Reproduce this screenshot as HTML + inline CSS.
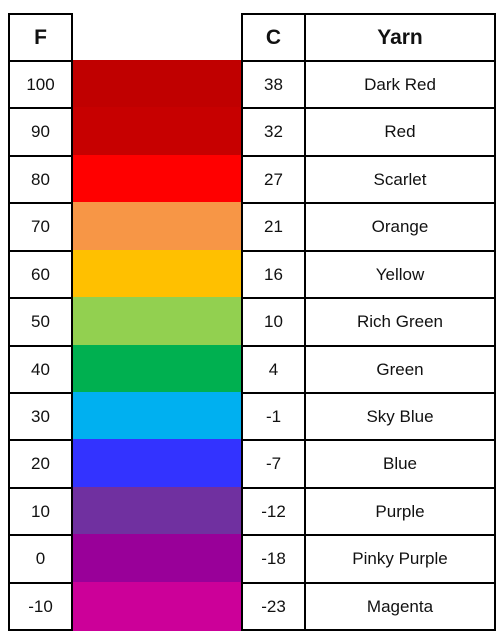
<!DOCTYPE html>
<html><head><style>
body{margin:0;width:504px;height:640px;background:#fff;font-family:"Liberation Sans",sans-serif;position:relative;overflow:hidden}
.c{position:absolute;box-sizing:border-box;display:flex;align-items:center;justify-content:center;font-size:17px;color:#111}
.b{border:2px solid #000}
.h{font-weight:bold;font-size:21px}
</style></head><body>
<div id="t"></div>
<script>
const rows=[["100","#c00000","38","Dark Red"],["90","#c70000","32","Red"],["80","#ff0000","27","Scarlet"],["70","#f79646","21","Orange"],["60","#ffc000","16","Yellow"],["50","#92d050","10","Rich Green"],["40","#00b050","4","Green"],["30","#00b0f0","-1","Sky Blue"],["20","#3333ff","-7","Blue"],["10","#7030a0","-12","Purple"],["0","#990099","-18","Pinky Purple"],["-10","#cc0099","-23","Magenta"]];
let h='';
const y0=13,hy=60,rh=(629-60)/12;
function cell(x,y,w,hh,txt,cls,bg){h+=`<div class="c ${cls}" style="left:${x}px;top:${y}px;width:${w}px;height:${hh}px;${bg?'background:'+bg:''}">${txt}</div>`;}
cell(8,y0,65,hy-y0+2,'F','b h');
cell(241,y0,65,hy-y0+2,'C','b h');
cell(304,y0,192,hy-y0+2,'Yarn','b h');
rows.forEach((r,i)=>{
 const y=Math.round(hy+i*rh), y2=Math.round(hy+(i+1)*rh);
 cell(73,y,168,y2-y+(i==11?2:0),'','',r[1]);
 cell(8,y,65,y2-y+2,r[0],'b');
 cell(241,y,65,y2-y+2,r[2],'b');
 cell(304,y,192,y2-y+2,r[3],'b');
});
document.getElementById('t').innerHTML=h;
</script>
</body></html>
